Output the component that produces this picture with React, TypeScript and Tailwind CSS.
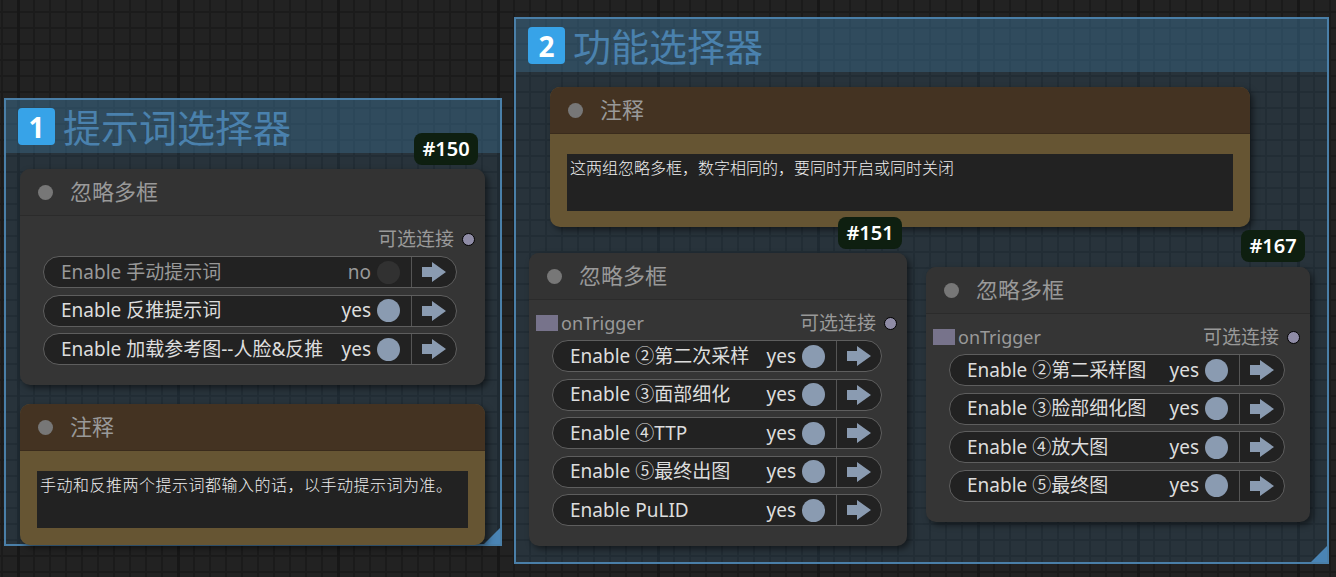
import React from "react"

const FONT = "font-['Noto_Sans','Noto_Sans_CJK_SC',sans-serif]"

type Widget = { label: string; on: boolean }

function Arrow() {
  return (
    <svg width="24" height="20" viewBox="0 0 24 20">
      <polygon points="0,5 10,5 10,0 24,10 10,20 10,15 0,15" fill="#8a9bb1" />
    </svg>
  )
}

function Toggle({ w }: { w: Widget }) {
  return (
    <div className="flex h-[32px] items-center rounded-full border border-[#5e5e5e] bg-[#222] pl-[17px]">
      <span className={`flex-1 whitespace-nowrap text-[19px] leading-none ${w.on ? "text-[#ddd]" : "text-[#999]"}`}>
        {w.label}
      </span>
      <span className={`text-[19px] leading-none ${w.on ? "text-[#ddd]" : "text-[#999]"}`}>{w.on ? "yes" : "no"}</span>
      <span className={`ml-[6px] mr-[11px] h-[23px] w-[23px] rounded-full ${w.on ? "bg-[#8a9bb1]" : "bg-[#313131]"}`} />
      <span className="w-px self-stretch bg-[#555]" />
      <span className="flex w-[44px] justify-center">
        <Arrow />
      </span>
    </div>
  )
}

function Badge({ id, x, y }: { id: string; x: number; y: number }) {
  return (
    <div
      className="absolute flex h-[32px] w-[64px] items-center justify-center rounded-[8px] bg-[#0e1f10] text-[20px] font-semibold text-white"
      style={{ left: x, top: y }}
    >
      {id}
    </div>
  )
}

function NodeTitle({ title, brown }: { title: string; brown?: boolean }) {
  return (
    <div
      className={`flex h-[47px] items-center gap-[17px] rounded-t-[10px] border-b pl-[18px] ${
        brown ? "border-[#3a2b1c] bg-[#443322]" : "border-[#2b2b2b] bg-[#333]"
      }`}
    >
      <span className="h-[15px] w-[15px] rounded-full bg-[#777]" />
      <span className="mb-[2px] text-[22px] leading-none text-[#999]">{title}</span>
    </div>
  )
}

function BypassNode({
  x,
  y,
  w,
  pill,
  trigger,
  widgets,
}: {
  x: number
  y: number
  w: number
  pill: number
  trigger?: boolean
  widgets: Widget[]
}) {
  return (
    <div
      className="absolute flex flex-col rounded-[10px] bg-[#353535] pb-[20px] shadow-[3px_3px_6px_rgba(0,0,0,0.5)]"
      style={{ left: x, top: y, width: w }}
    >
      <NodeTitle title="忽略多框" />
      <div className="mt-[12px] flex h-[22px] items-center pl-[7px] pr-[10px]">
        {trigger && (
          <>
            <span className="h-[16px] w-[22px] bg-[#77738b]" />
            <span className="ml-[3px] text-[18px] leading-none text-[#999]">onTrigger</span>
          </>
        )}
        <span className="ml-auto text-[19px] leading-none text-[#999]">可选连接</span>
        <span className="ml-[8px] h-[13px] w-[13px] rounded-full border-[1.5px] border-black bg-[#8f8ca6]" />
      </div>
      <div className="mt-[6px] flex flex-col gap-[6.5px] pl-[23px]" style={{ width: pill + 23 }}>
        {widgets.map((wd) => (
          <Toggle key={wd.label} w={wd} />
        ))}
      </div>
    </div>
  )
}

function NoteNode({ x, y, w, h, text, wide }: { x: number; y: number; w: number; h: number; text: string; wide?: boolean }) {
  return (
    <div
      className="absolute flex flex-col rounded-[10px] bg-[#665533] shadow-[3px_3px_6px_rgba(0,0,0,0.5)]"
      style={{ left: x, top: y, width: w, height: h }}
    >
      <NodeTitle title="注释" brown />
      <div className="mx-[17px] mt-[20px] h-[57px] bg-[#222] px-[3px] pt-[3px] font-['Noto_Sans_CJK_SC',sans-serif] text-[16px] font-light leading-[20px] text-[#eee]">
        <span className={wide ? "" : "tracking-[0.5px]"}>{text}</span>
      </div>
    </div>
  )
}

function Group({ x, y, w, h, num, title }: { x: number; y: number; w: number; h: number; num: string; title: string }) {
  return (
    <div
      className="absolute flex flex-col border-2 border-[#4a7fa8] bg-[#3f789e]/20"
      style={{ left: x, top: y, width: w, height: h }}
    >
      <div className="flex h-[53px] items-center gap-[8px] bg-[#3f789e]/35 pl-[12px]">
        <span className="flex h-[37px] w-[37px] items-center justify-center rounded-[4px] bg-[#37a3e8] text-[28px] font-bold leading-none text-white">
          {num}
        </span>
        <span className="text-[38px] leading-none text-[#4a81ad]">{title}</span>
      </div>
      <span className="absolute bottom-0 right-0 h-[16px] w-[16px] bg-[#4a84b4] [clip-path:polygon(100%_0,100%_100%,0_100%)]" />
    </div>
  )
}

export default function App() {
  return (
    <div
      className={`relative h-[577px] w-[1336px] overflow-hidden bg-[#222] ${FONT} [background-image:linear-gradient(to_right,#171717_3px,transparent_3px),linear-gradient(to_right,#1b1b1b_2px,transparent_2px),linear-gradient(to_bottom,#1b1b1b_2px,transparent_2px)] [background-size:160px_160px,16px_16px,16px_16px] [background-position:17px_0,1px_0,0_11px]`}
    >
      <Group x={4} y={98} w={498} h={448} num="1" title="提示词选择器" />
      <Group x={514} y={17} w={815} h={547} num="2" title="功能选择器" />

      <Badge id="#150" x={414} y={133} />
      <BypassNode
        x={20}
        y={169}
        w={465}
        pill={414}
        widgets={[
          { label: "Enable 手动提示词", on: false },
          { label: "Enable 反推提示词", on: true },
          { label: "Enable 加载参考图--人脸&反推", on: true },
        ]}
      />
      <NoteNode x={20} y={404} w={465} h={141} text="手动和反推两个提示词都输入的话，以手动提示词为准。" />

      <NoteNode x={550} y={87} w={700} h={140} text="这两组忽略多框，数字相同的，要同时开启或同时关闭" wide />

      <Badge id="#151" x={838} y={217} />
      <BypassNode
        x={529}
        y={253}
        w={378}
        pill={330}
        trigger
        widgets={[
          { label: "Enable ②第二次采样", on: true },
          { label: "Enable ③面部细化", on: true },
          { label: "Enable ④TTP", on: true },
          { label: "Enable ⑤最终出图", on: true },
          { label: "Enable PuLID", on: true },
        ]}
      />

      <Badge id="#167" x={1241} y={230} />
      <BypassNode
        x={926}
        y={267}
        w={384}
        pill={336}
        trigger
        widgets={[
          { label: "Enable ②第二采样图", on: true },
          { label: "Enable ③脸部细化图", on: true },
          { label: "Enable ④放大图", on: true },
          { label: "Enable ⑤最终图", on: true },
        ]}
      />
    </div>
  )
}
